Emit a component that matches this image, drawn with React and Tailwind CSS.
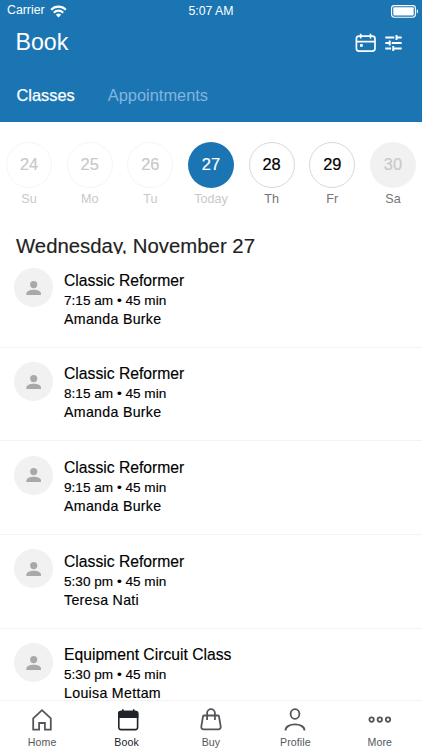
const days = [
  { n: "24", label: "Su", circle: "border border-[#f5f5f5] text-[#c9c9c9]", text: "text-[#c9c9c9]" },
  { n: "25", label: "Mo", circle: "border border-[#f5f5f5] text-[#c9c9c9]", text: "text-[#c9c9c9]" },
  { n: "26", label: "Tu", circle: "border border-[#f5f5f5] text-[#c9c9c9]", text: "text-[#c9c9c9]" },
  { n: "27", label: "Today", circle: "bg-[#1b75b3] text-white", text: "text-[#c9c9c9]" },
  { n: "28", label: "Th", circle: "border border-[#d8d8d8] text-black", text: "text-[#757575]" },
  { n: "29", label: "Fr", circle: "border border-[#d8d8d8] text-black", text: "text-[#757575]" },
  { n: "30", label: "Sa", circle: "bg-[#f1f1f1] text-[#c9c9c9]", text: "text-[#757575]" },
];

const classes = [
  { title: "Classic Reformer", time: "7:15 am • 45 min", who: "Amanda Burke" },
  { title: "Classic Reformer", time: "8:15 am • 45 min", who: "Amanda Burke" },
  { title: "Classic Reformer", time: "9:15 am • 45 min", who: "Amanda Burke" },
  { title: "Classic Reformer", time: "5:30 pm • 45 min", who: "Teresa Nati" },
  { title: "Equipment Circuit Class", time: "5:30 pm • 45 min", who: "Louisa Mettam" },
];

function Wifi() {
  return (
    <svg width="17" height="13" viewBox="0 0 18 13" preserveAspectRatio="none" fill="none" stroke="white" strokeWidth="2.2">
      <path d="M1.2 4.7a11.2 11.2 0 0 1 15.6 0" />
      <path d="M4 7.7a7.2 7.2 0 0 1 10 0" />
      <path d="M9 12.6 6.2 9.8a4 4 0 0 1 5.6 0z" fill="white" stroke="none" />
    </svg>
  );
}

function Battery() {
  return (
    <svg width="28" height="13" viewBox="0 0 28 13" fill="none">
      <rect x="0.6" y="0.6" width="23.8" height="11.6" rx="2.6" stroke="white" strokeWidth="1.1" />
      <rect x="2.3" y="2.3" width="20.4" height="8.2" rx="1" fill="white" />
      <path d="M25.8 4.2c1.6.6 1.6 3.8 0 4.4z" fill="white" />
    </svg>
  );
}

function CalendarOutline() {
  return (
    <svg width="22" height="20" viewBox="0 0 22 20" fill="none" stroke="white" strokeWidth="1.7">
      <rect x="1.4" y="3.2" width="18.6" height="15" rx="2.6" />
      <path d="M1.4 8.6H20M5.7.8v4.8M15.5.8v4.8" />
      <rect x="5" y="11" width="2.8" height="2.8" rx=".6" fill="white" stroke="none" />
    </svg>
  );
}

function Sliders() {
  return (
    <svg width="18" height="18" viewBox="0 0 18 18" fill="none" stroke="white" strokeWidth="1.9">
      <path d="M.3 3.5h9M11.5 3.5h5.2M11.5 1v5M.3 9h4.4M6.7 9h10M4.7 6.5v5M.3 14.5H6M8.2 14.5h8.5M8.2 12v5" />
    </svg>
  );
}

function Person() {
  return (
    <svg width="16" height="16" viewBox="0 0 16 16" fill="#a9a9a9">
      <circle cx="7.7" cy="4.6" r="3.6" />
      <path d="M.4 15v-1.5c0-2.3 3.7-3.7 7.3-3.7s7.3 1.4 7.3 3.7V15z" />
    </svg>
  );
}

const stroke = { fill: "none", stroke: "#54565b", strokeWidth: 1.8 };

function HomeIcon() {
  return (
    <svg width="24" height="24" viewBox="0 0 24 24" {...stroke}>
      <path d="M3.2 10.4 12 2.2l8.8 8.2v11.2h-5.9V15H9.1v6.6H3.2z" />
    </svg>
  );
}

function BookIcon() {
  return (
    <svg width="24" height="24" viewBox="0 0 24 24">
      <g transform="translate(.9 0)">
        <rect x="2.9" y="3.5" width="18.8" height="18.1" rx="2.3" fill="white" stroke="#202329" strokeWidth="1.6" />
        <path d="M2.1 10V5.3a2.6 2.6 0 0 1 2.6-2.6h1.4V1.2h1.6v1.5h9.3V1.2h1.6v1.5h1.3a2.6 2.6 0 0 1 2.6 2.6V10z" fill="#202329" />
      </g>
    </svg>
  );
}

function BagIcon() {
  return (
    <svg width="24" height="24" viewBox="0 0 24 24" {...stroke}>
      <path d="M5 7.5h14a1 1 0 0 1 1 .8l1.7 10.4a2.3 2.3 0 0 1-2.3 2.7H4.6a2.3 2.3 0 0 1-2.3-2.7L4 8.3a1 1 0 0 1 1-.8z" />
      <path d="M8.1 12V5.1a3.9 3.9 0 0 1 7.8 0V12" />
    </svg>
  );
}

function ProfileIcon() {
  return (
    <svg width="24" height="24" viewBox="0 0 24 24" {...stroke}>
      <ellipse cx="12" cy="6" rx="4.4" ry="4.9" />
      <path d="M2.5 22.4c0-8 19-8 19 0" />
    </svg>
  );
}

function MoreIcon() {
  return (
    <svg width="24" height="24" viewBox="0 0 24 24" {...stroke}>
      <circle cx="3.6" cy="11.6" r="2.2" />
      <circle cx="11.8" cy="11.6" r="2.2" />
      <circle cx="20" cy="11.6" r="2.2" />
    </svg>
  );
}

const tabs = [
  { label: "Home", Icon: HomeIcon, color: "text-[#54565b]" },
  { label: "Book", Icon: BookIcon, color: "text-[#202329]" },
  { label: "Buy", Icon: BagIcon, color: "text-[#54565b]" },
  { label: "Profile", Icon: ProfileIcon, color: "text-[#54565b]" },
  { label: "More", Icon: MoreIcon, color: "text-[#54565b]" },
];

export default function App() {
  return (
    <div className="flex h-[750px] w-[422px] flex-col overflow-hidden bg-white font-['Liberation_Sans',Arial,sans-serif] text-black">
      <header className="h-[122px] shrink-0 bg-[#1b75b3] text-white">
        <div className="grid h-5 grid-cols-3 items-center pl-[7px] pr-[3px] text-[12.3px] leading-5">
          <div className="flex items-center gap-[5px]">
            <span className="pb-[2px]">Carrier</span>
            <Wifi />
          </div>
          <div className="pb-px pr-[4px] text-center">5:07 AM</div>
          <div className="flex justify-end"><Battery /></div>
        </div>
        <div className="flex h-[45px] items-center justify-between pl-[15.5px] pr-[19px]">
          <h1 className="text-[23.2px] leading-[45px]">Book</h1>
          <div className="flex items-center gap-[8px]">
            <CalendarOutline />
            <Sliders />
          </div>
        </div>
        <nav className="flex h-[61px] items-center gap-[33px] pl-[16.5px] text-[16.4px]">
          <span className="[-webkit-text-stroke:0.25px_white]">Classes</span>
          <span className="text-[#83b5dc]">Appointments</span>
        </nav>
      </header>

      <section className="flex h-[111px] shrink-0 justify-between pl-[6px] pr-[6px] pt-[19.5px]">
        {days.map((d) => (
          <div key={d.n} className="flex w-[46px] flex-col items-center">
            <div className={"flex size-[46px] items-center justify-center rounded-full text-[16.4px] [-webkit-text-stroke:0.2px_currentColor] " + d.circle}>
              {d.n}
            </div>
            <span className={"mt-[3px] text-[12.6px] leading-[17px] " + d.text}>{d.label}</span>
          </div>
        ))}
      </section>

      <main className="flex h-[467px] shrink-0 flex-col overflow-hidden">
        <h2 className="h-[21px] shrink-0 overflow-hidden pl-[16px] text-[20.35px] leading-[26px] text-[#222] [-webkit-text-stroke:0.15px_currentColor]">
          Wednesday, November 27
        </h2>
        {classes.map((c) => (
          <article key={c.time + c.title} className="flex h-[93.7px] shrink-0 gap-[11px] border-b border-[#f3f3f3] pl-[14px] pt-[14.4px]">
            <div className="flex size-[39px] items-center justify-center rounded-full bg-[#f1f1f1]">
              <Person />
            </div>
            <div className="pt-[2.2px] [-webkit-text-stroke:0.15px_currentColor]">
              <h3 className="text-[15.7px] leading-[20px]">{c.title}</h3>
              <p className="text-[13.6px] leading-[20px]">{c.time}</p>
              <p className="text-[14.2px] leading-[17px] tracking-[0.3px]">{c.who}</p>
            </div>
          </article>
        ))}
      </main>

      <footer className="grid h-[50px] shrink-0 grid-cols-5 border-t border-[#f3f3f3]">
        {tabs.map(({ label, Icon, color }) => (
          <div key={label} className={"flex flex-col items-center pt-[7px] " + color}>
            <Icon />
            <span className="mt-[4px] text-[10.6px] leading-[12px] tracking-[0.1px]">{label}</span>
          </div>
        ))}
      </footer>
    </div>
  );
}
